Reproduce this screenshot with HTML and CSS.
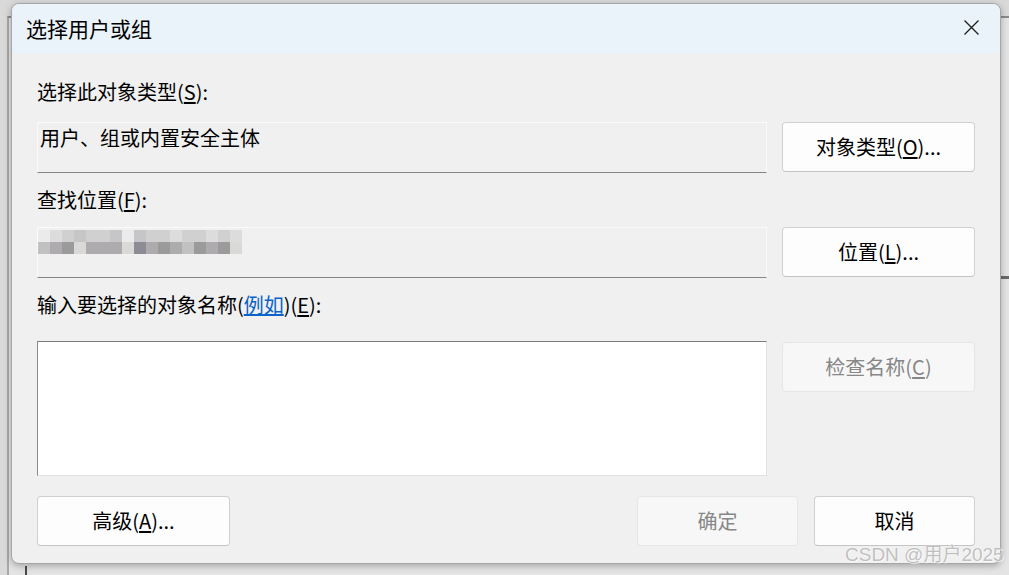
FILE: index.html
```html
<!DOCTYPE html>
<html lang="zh-CN">
<head>
<meta charset="utf-8">
<title>选择用户或组</title>
<link rel="stylesheet" href="styles.css">
</head>
<body>
<div class="desk">
  <div class="backwin">
    <div class="backwin-sep"></div>
    <div class="backwin-col"></div>
  </div>

  <div class="dialog">
    <div class="titlebar">
      <span class="title">选择用户或组</span>
      <svg class="close" width="15" height="15" viewBox="0 0 15 15" aria-label="关闭">
        <path d="M0.5 0.5 L14.5 14.5 M14.5 0.5 L0.5 14.5" stroke="#1c1c1c" stroke-width="1.3" fill="none"/>
      </svg>
    </div>

    <div class="content">
      <div class="label l1">选择此对象类型(<u>S</u>):</div>
      <div class="row r1">
        <div class="field">用户、组或内置安全主体</div>
        <button class="btn">对象类型(<u>O</u>)...</button>
      </div>

      <div class="label l2">查找位置(<u>F</u>):</div>
      <div class="row r2">
        <div class="field">
          <div class="mosaic">
            <div class="mrow top">
              <i class="c0"></i><i class="c1"></i><i class="c2"></i><i class="c3"></i><i class="c2"></i><i class="c2"></i><i class="c3"></i><i class="c0"></i><i class="c3"></i><i class="c2"></i><i class="c2"></i><i class="c1"></i><i class="c2"></i><i class="c2"></i><i class="c1"></i><i class="c2"></i><i class="c1"></i>
            </div>
            <div class="mrow bot">
              <i class="d3"></i><i class="d2"></i><i class="d1"></i><i class="d4"></i><i class="d2"></i><i class="d2"></i><i class="d2"></i><i class="d4"></i><i class="d0"></i><i class="d2"></i><i class="d1"></i><i class="d2"></i><i class="d3"></i><i class="d1"></i><i class="d2"></i><i class="d1"></i><i class="d4"></i>
            </div>
          </div>
        </div>
        <button class="btn">位置(<u>L</u>)...</button>
      </div>

      <div class="label l3">输入要选择的对象名称(<a class="link" href="#">例如</a>)(<u>E</u>):</div>
      <div class="row r3">
        <div class="names"></div>
        <button class="btn disabled">检查名称(<u>C</u>)</button>
      </div>

      <div class="footer">
        <button class="btn wide">高级(<u>A</u>)...</button>
        <div class="footer-right">
          <button class="btn narrow disabled">确定</button>
          <button class="btn narrow">取消</button>
        </div>
      </div>
    </div>
  </div>

  <div class="watermark">CSDN @用户2025</div>
</div>
</body>
</html>
```

FILE: styles.css
```css
* { box-sizing: border-box; }

html, body {
  margin: 0;
  padding: 0;
}

body {
  width: 1009px;
  height: 575px;
  overflow: hidden;
  font-family: "Noto Sans CJK SC", "Noto Sans", sans-serif;
  color: #000;
}

.desk {
  position: relative;
  width: 1009px;
  height: 575px;
  background: #d9d9d9;
  overflow: hidden;
}

/* window behind the dialog */
.backwin {
  position: absolute;
  left: 7px;
  top: 16px;
  width: 1100px;
  height: 700px;
  background: #e4e4e4;
  border-left: 2px solid #a9a9a9;
  border-top: 2px solid #8a8a8a;
}

.backwin-sep {
  position: absolute;
  left: 990px;
  right: 0;
  top: 258px;
  height: 3px;
  background: #6a6a6a;
}

.backwin-col {
  position: absolute;
  left: 16px;
  top: 548px;
  width: 2px;
  height: 30px;
  background: #4a4a4a;
}

/* dialog window */
.dialog {
  position: absolute;
  left: 11px;
  top: 3px;
  width: 990px;
  height: 561px;
  border: 1px solid #a6a6a6;
  border-radius: 8px;
  background: #f0f0f0;
  overflow: hidden;
  box-shadow: 0 2px 7px rgba(0, 0, 0, 0.28);
  display: flex;
  flex-direction: column;
}

.titlebar {
  height: 49px;
  flex: none;
  background: #eaf3f9;
  display: flex;
  align-items: center;
  justify-content: space-between;
  padding: 0 21px 0 14px;
}

.title {
  font-size: 21px;
  line-height: 28px;
  position: relative;
  top: -1px;
}

.close {
  display: block;
  position: relative;
  top: -1px;
}

.content {
  padding: 25px 25px 0 25px;
  display: flex;
  flex-direction: column;
}

.label {
  font-size: 20px;
  line-height: 28px;
  height: 28px;
  white-space: nowrap;
}

.l1 { margin-bottom: 16px; }
.l2 { margin-top: 13px; margin-bottom: 13px; }
.l3 { margin-top: 13px; margin-bottom: 22px; }

.link {
  color: #0a63c9;
  text-decoration: underline;
}

u {
  text-decoration: underline;
  text-underline-offset: 2px;
}

.row {
  display: flex;
  align-items: flex-start;
  gap: 15px;
}

.field {
  width: 730px;
  height: 51px;
  background: #f0f0f0;
  border: 1px solid #fafafa;
  border-bottom-color: #858585;
  font-size: 20px;
  line-height: 28px;
  padding: 1px 0 0 2px;
  white-space: nowrap;
}

.names {
  width: 730px;
  height: 135px;
  background: #fff;
  border: 1px solid #e2e2e2;
  border-top-color: #7e7e7e;
  border-left-color: #8a8a8a;
}

.btn {
  width: 193px;
  height: 50px;
  flex: none;
  background: #fdfdfd;
  border: 1px solid #d0d0d0;
  border-bottom-color: #c4c4c4;
  border-radius: 4px;
  font-family: inherit;
  font-size: 20px;
  line-height: 28px;
  color: #000;
  padding: 0;
  display: flex;
  align-items: center;
  justify-content: center;
  white-space: nowrap;
}

.btn.disabled {
  background: #f7f7f7;
  border-color: #e6e6e6;
  color: #878787;
}

.r3 .btn { margin-top: 1px; }

.footer {
  margin-top: 20px;
  display: flex;
  justify-content: space-between;
}

.footer-right {
  display: flex;
  gap: 16px;
}

.btn.narrow { width: 161px; }

/* pixelated (blurred) location text */
.mosaic {
  display: flex;
  flex-direction: column;
  margin-left: -2px;
  margin-top: 1px;
}

.mrow {
  display: flex;
  height: 12px;
}

.mrow i {
  display: block;
  width: 12px;
  height: 12px;
}

.c0 { background: #ebebeb; }
.c1 { background: #dcdcdc; }
.c2 { background: #d0d0d0; }
.c3 { background: #c6c5c7; }

.d0 { background: #8d8c94; }
.d1 { background: #9b9b9b; }
.d2 { background: #aeabae; }
.d3 { background: #c1c1c1; }
.d4 { background: #d9d9d7; }

.watermark {
  position: absolute;
  left: 845px;
  top: 542px;
  font-family: "Liberation Sans", "Noto Sans CJK SC", sans-serif;
  font-size: 19px;
  line-height: 26px;
  color: rgba(170, 170, 170, 0.75);
  text-shadow: 0 0 1px #fff, 1px 1px 0 rgba(255, 255, 255, 0.6);
  white-space: nowrap;
}
```
